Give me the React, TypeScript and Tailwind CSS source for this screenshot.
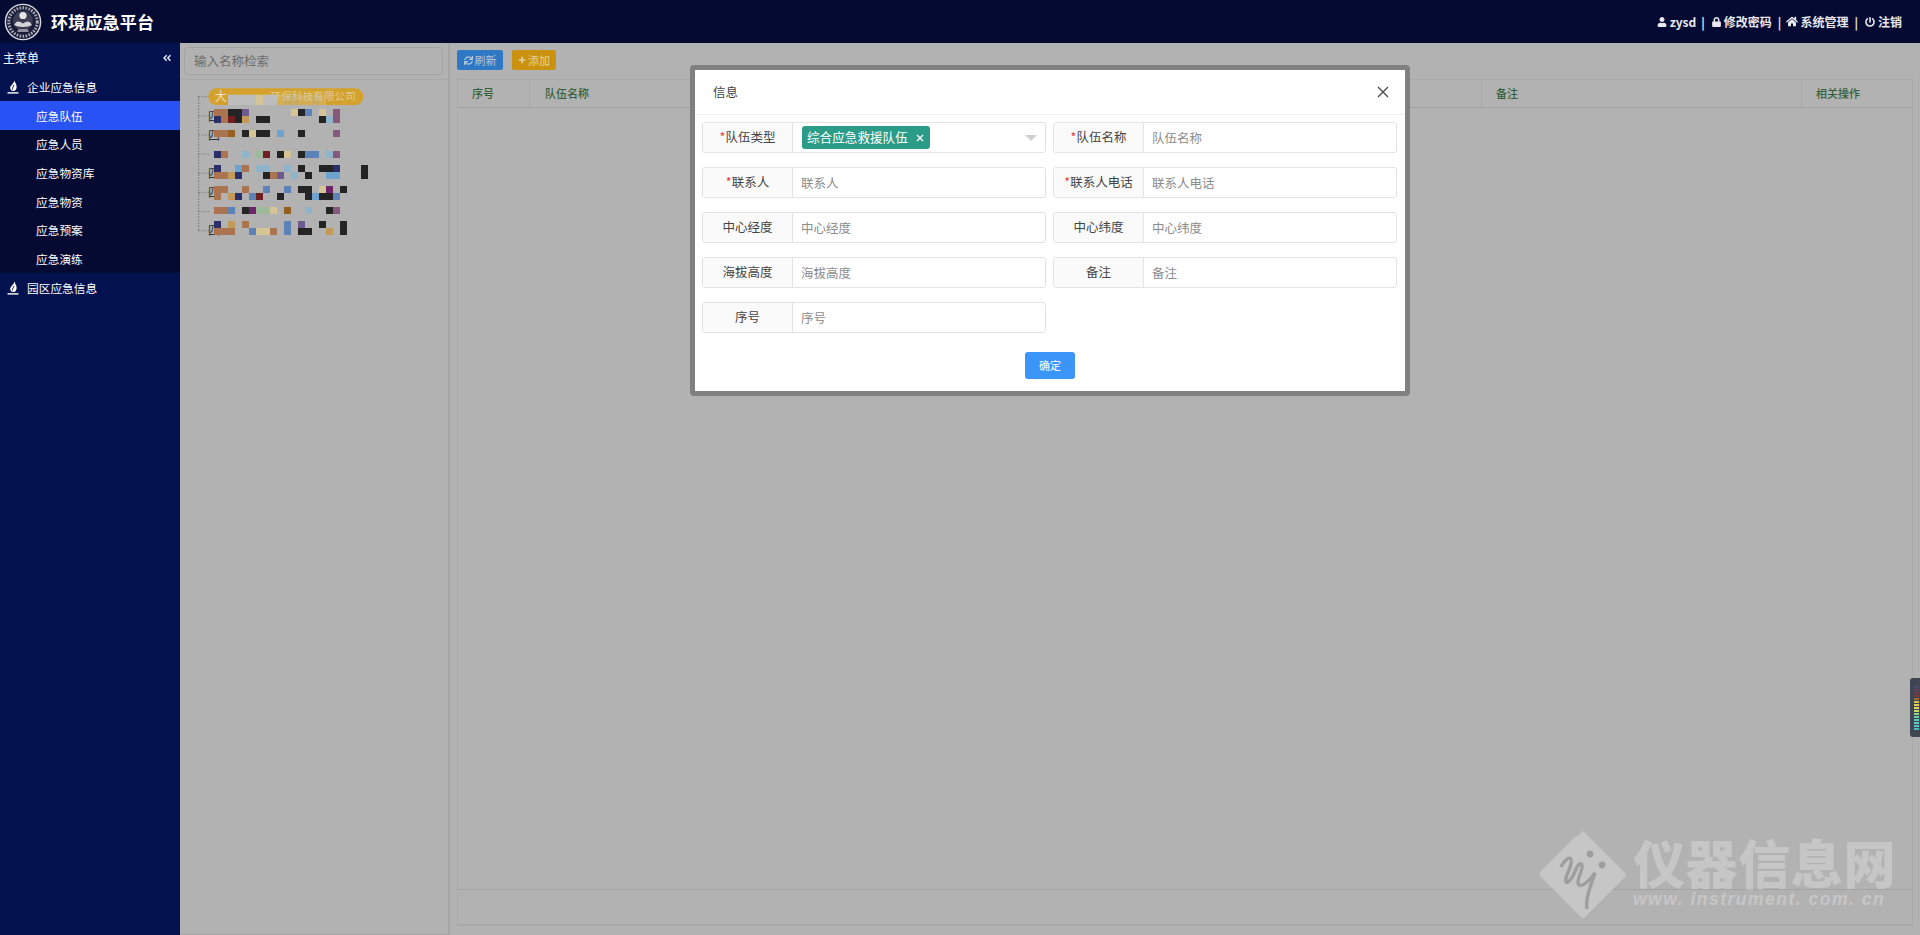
import { FaUser, FaLock, FaHome, FaPowerOff, FaSync, FaPlus, FaAngleDoubleLeft } from "react-icons/fa";

const font = { fontFamily: '"Noto Sans CJK SC", "Noto Sans", sans-serif' };

function Flame() {
  return (
    <svg width="13" height="14" viewBox="0 0 13 14" className="shrink-0">
      <path d="M7.5 0.5 C8 3 10 4.5 9.6 7.5 C9.3 10 8 11 6.2 11 C4.4 11 3.2 9.5 3.2 8 C3.2 5.5 6.5 4 7.5 0.5 Z" fill="#fff" />
      <path d="M7 5 C6.5 7 5 7.5 5.5 9.5" stroke="#0a1550" strokeWidth="1" fill="none" />
      <rect x="0.5" y="12.2" width="11" height="1.4" fill="#fff" />
    </svg>
  );
}

function Emblem() {
  return (
    <svg width="38" height="38" viewBox="0 0 38 38" className="shrink-0">
      <circle cx="19" cy="19" r="17.6" fill="#1a1d3a" stroke="#d8d8de" strokeWidth="1.4" />
      <circle cx="19" cy="19" r="14.2" fill="none" stroke="#a9aab6" strokeWidth="3" strokeDasharray="1.6 1.4" />
      <circle cx="19" cy="17.5" r="10" fill="#3b3d52" />
      <circle cx="19" cy="12.5" r="3.6" fill="#e6e6e6" />
      <path d="M10 22 C13 17 15 18 19 20.5 C23 18 25 17 28 22 C24 24.5 14 24.5 10 22 Z" fill="#d4d4d8" />
      <path d="M13 29 L14.5 26 H23.5 L25 29 Z" fill="#8d8e9c" />
    </svg>
  );
}

const NAVY = "#2c2e6a", BROWN = "#a9744f", DARK = "#242424", PURP = "#6f5a8c", RED = "#6f1f22", TAN = "#c3995a", BLUE = "#6fa3cf", MID = "#5c82b8", PALE = "#8fb4c9", PLUM = "#86587a", MUTE = "#bdbdbd", SAND = "#d5c596", GRN = "#9dbb9b", GOLD = "#96601f", MAG = "#6d2468";

const cells: [number, number, number, number, string][] = [
  [102, 87, 42, 21, BROWN], [144, 87, 42, 21, DARK], [186, 87, 21, 21, PURP], [102, 108, 21, 21, NAVY], [123, 108, 21, 21, BROWN], [144, 108, 21, 21, RED], [165, 108, 21, 21, DARK], [186, 108, 21, 21, TAN],
  [228, 108, 42, 21, DARK], [333, 87, 21, 21, SAND], [354, 87, 21, 21, DARK], [375, 87, 21, 21, MID], [417, 87, 21, 21, SAND], [417, 108, 21, 21, DARK], [438, 108, 21, 21, PALE], [459, 87, 21, 42, PLUM],
  [102, 150, 42, 21, BROWN], [144, 150, 21, 21, GOLD], [186, 150, 21, 21, DARK], [207, 150, 21, 21, SAND], [228, 150, 42, 21, DARK], [291, 150, 21, 21, BLUE], [354, 150, 21, 21, DARK], [459, 150, 21, 21, PLUM],
  [102, 213, 21, 21, NAVY], [123, 213, 21, 21, BROWN], [186, 213, 21, 21, PALE], [228, 213, 21, 21, GRN], [249, 213, 21, 21, RED], [291, 213, 21, 21, DARK], [312, 213, 21, 21, SAND], [354, 213, 21, 21, DARK], [375, 213, 42, 21, MID], [438, 213, 21, 21, PALE], [459, 213, 21, 21, PLUM],
  [102, 255, 21, 21, NAVY], [165, 255, 21, 21, BLUE], [186, 255, 21, 21, BROWN], [228, 255, 42, 21, PALE], [312, 255, 21, 21, PALE], [354, 255, 21, 21, DARK], [417, 255, 42, 21, DARK], [459, 255, 21, 21, NAVY], [543, 255, 21, 42, DARK],
  [102, 276, 42, 21, BROWN], [144, 276, 21, 21, TAN], [165, 276, 21, 21, NAVY], [249, 276, 21, 21, DARK], [270, 276, 21, 21, BROWN], [291, 276, 21, 21, PURP], [333, 276, 21, 21, PALE], [375, 276, 21, 21, DARK], [438, 276, 42, 21, BLUE],
  [102, 318, 42, 21, BROWN], [186, 318, 21, 21, BROWN], [249, 318, 21, 21, MID], [312, 318, 21, 21, MID], [354, 318, 42, 21, DARK], [417, 318, 21, 21, SAND], [438, 318, 21, 21, MAG], [480, 318, 21, 21, DARK],
  [102, 339, 21, 21, BROWN], [144, 339, 21, 21, TAN], [165, 339, 21, 21, NAVY], [207, 339, 21, 21, MID], [228, 339, 21, 21, RED], [291, 339, 21, 21, DARK], [375, 339, 21, 21, DARK], [396, 339, 21, 21, BLUE], [417, 339, 42, 21, DARK], [459, 339, 21, 21, MID],
  [102, 381, 42, 21, BROWN], [144, 381, 21, 21, MID], [186, 381, 21, 21, DARK], [207, 381, 21, 21, MAG], [228, 381, 42, 21, GRN], [270, 381, 21, 21, SAND], [312, 381, 21, 21, GOLD], [375, 381, 21, 21, PALE], [438, 381, 21, 21, DARK], [459, 381, 21, 21, PLUM],
  [102, 423, 21, 21, NAVY], [144, 423, 21, 21, TAN], [186, 423, 21, 21, BROWN], [312, 423, 21, 42, MID], [354, 423, 21, 21, PURP], [417, 423, 21, 21, DARK], [480, 423, 21, 42, DARK],
  [102, 444, 63, 21, BROWN], [207, 444, 21, 21, MID], [228, 444, 42, 21, SAND], [270, 444, 21, 21, BROWN], [354, 444, 42, 21, DARK], [438, 444, 21, 21, TAN],
];

const patches: [number, number, number, string][] = [[144, 44, 84, MUTE], [228, 44, 21, SAND], [249, 44, 42, MUTE], [291, 44, 21, SAND], [312, 44, 42, MUTE], [354, 44, 21, SAND], [375, 44, 21, SAND], [396, 44, 21, MUTE], [417, 44, 21, SAND]];

function TreeMosaic() {
  const rows = [50, 108, 165, 222, 280, 337, 395, 452];
  return (
    <svg width="220" height="170" viewBox="0 0 660 510" className="block">
      <path d="M56 50 V452" stroke="#555" strokeWidth="3" strokeDasharray="3 6" fill="none" />
      {rows.map((y) => (
        <path key={y} d={`M56 ${y} H90`} stroke="#666" strokeWidth="3" strokeDasharray="3 6" fill="none" />
      ))}
      <rect x="85" y="25" width="465" height="50" rx="24" fill="#d4a22c" />
      <text x="104" y="62" fontSize="36" fill="#e8e0c8">大</text>
      <text x="272" y="60" fontSize="32" fill="#dccb98">环保科技有限公司</text>
      {patches.map(([x, y, w, c], i) => (
        <rect key={i} x={x} y={y} width={w} height={31} fill={c} opacity={i < 3 ? 1 : 0.35} />
      ))}
      {[108, 165, 280, 337, 452].map((y) => (
        <text key={y} x="84" y={y + 14} fontSize="36" fill="#333">四</text>
      ))}
      {cells.map(([x, y, w, h, c], i) => (
        <rect key={i} x={x} y={y} width={w} height={h} fill={c} />
      ))}
    </svg>
  );
}

function Field({ label, req, children }: { label: string; req?: boolean; children?: React.ReactNode }) {
  return (
    <div className="flex h-[31px] rounded-[3px] border border-[#e3e3e3] overflow-hidden bg-white">
      <div className="w-[90px] shrink-0 bg-[#fafafa] border-r border-[#e3e3e3] flex items-center justify-center text-[12.5px] text-[#444]">
        {req && <span className="text-[#e33]">*</span>}
        {label}
      </div>
      <div className="flex-1 flex items-center pl-2 pr-3 pt-[1px] text-[12.5px] text-[#8c8c8c] relative">{children ?? label}</div>
    </div>
  );
}

function Diamond() {
  return (
    <svg width="92" height="92" viewBox="0 0 92 92" className="shrink-0">
      <path d="M46 4 L88 46 Q90 48 88 50 L48 90 Q46 92 44 90 L4 50 Q1 47 4 44 L38 10 L42 8 Z" fill="#c6c6c6" />
      <circle cx="53" cy="27" r="3.4" fill="#9e9e9e" />
      <circle cx="65" cy="38" r="3.4" fill="#9e9e9e" />
      <path d="M24 40 C30 28 40 26 30 48 C26 58 32 60 40 40 C44 34 48 36 42 50 C38 62 46 62 58 46 C54 58 48 72 50 82" stroke="#9e9e9e" strokeWidth="3.4" fill="none" />
    </svg>
  );
}

export default function App() {
  const sub = ["应急队伍", "应急人员", "应急物资库", "应急物资", "应急预案", "应急演练"];
  const ticks = ["#4a4a68", "#5a4460", "#6a3a4a", "#7a3a3a", "#9a6a3a", "#d8c24a", "#e0d050", "#e0d860", "#c8d868", "#90d090", "#70c8a8", "#60c8b8", "#60c8c0", "#58c0c0", "#50b8b8"];
  return (
    <div style={font} className="relative w-[1920px] h-[935px] overflow-hidden flex flex-col bg-[#b2b2b2]">
      <header className="h-[43px] shrink-0 bg-[#050a33] flex items-center justify-between pl-1 pr-[18px] text-white">
        <div className="flex items-center gap-[9px]">
          <Emblem />
          <span className="text-[17px] font-bold tracking-[0.2px]">环境应急平台</span>
        </div>
        <div className="flex items-center text-[12px] font-bold text-[#e8e8ee]">
          <FaUser className="w-[10px] h-[10px] mr-[3px]" />
          <span>zysd</span>
          <span className="mx-[5px]">|</span>
          <FaLock className="w-[9px] h-[10px] ml-[2px] mr-[3px]" />
          <span>修改密码</span>
          <span className="ml-[6px] mr-[3px]">|</span>
          <FaHome className="w-[12px] h-[11px] ml-[2px] mr-[2px]" />
          <span>系统管理</span>
          <span className="ml-[6px] mr-[5px]">|</span>
          <FaPowerOff className="w-[10px] h-[10px] ml-[2px] mr-[3px]" />
          <span>注销</span>
        </div>
      </header>
      <div className="flex-1 flex min-h-0">
        <aside className="w-[180px] shrink-0 bg-[#03114f] text-white text-[12px]">
          <div className="h-[29px] flex items-center justify-between pl-[3px] pr-[8px]">
            <span>主菜单</span>
            <FaAngleDoubleLeft className="w-[10px] h-[10px] text-[#dfe3f5]" />
          </div>
          <div className="h-[29px] flex items-center pl-[7px] gap-[7px]">
            <Flame />
            <span className="text-[11.7px]">企业应急信息</span>
          </div>
          <div className="bg-[#050a33]">
            {sub.map((s, i) => (
              <div key={s} className={`h-[28.7px] flex items-center pl-[36px] text-[11.7px] ${i === 0 ? "bg-[#2952f5]" : ""}`}>
                {s}
              </div>
            ))}
          </div>
          <div className="h-[29px] flex items-center pl-[7px] gap-[7px]">
            <Flame />
            <span className="text-[11.7px]">园区应急信息</span>
          </div>
        </aside>
        <main className="flex-1 flex min-w-0">
          <section className="w-[270px] shrink-0 border-r-2 border-[#a6a6a6] border-b border-b-[#a6a6a6]">
            <div className="h-[37px] border-b border-[#a8a8a8] pt-[4px] pl-[4px] pr-[5px]">
              <div className="h-[28px] rounded-[4px] border border-[#a3a3a3] flex items-center pl-[9px] text-[12.5px] text-[#6c6c6c]">输入名称检索</div>
            </div>
            <TreeMosaic />
          </section>
          <section className="flex-1 flex flex-col pl-[7px] pr-[7px] pb-[9px] pt-[7px] min-w-0">
            <div className="h-[20px] flex gap-[9px] shrink-0 text-[11px]">
              <button className="w-[46px] h-[20px] rounded-[2px] bg-[#2f78c4] text-[#b5c6d8] flex items-center justify-center gap-[2px]">
                <FaSync className="w-[9px] h-[9px]" />
                刷新
              </button>
              <button className="w-[44px] h-[20px] rounded-[2px] bg-[#cb9210] text-[#e4d4a4] flex items-center justify-center gap-[2px]">
                <FaPlus className="w-[8px] h-[8px]" />
                添加
              </button>
            </div>
            <div className="mt-[9px] flex-1 flex flex-col border border-[#a9a9a9] border-b-2 min-h-0">
              <div className="h-[28px] shrink-0 flex border-b border-[#a3a3a3] text-[11px] font-medium text-[#35603a]">
                <div className="w-[72px] flex items-center pl-[14px] border-r border-[#a9a9a9]">序号</div>
                <div className="flex-1 flex items-center pl-[15px] border-r border-[#a9a9a9]">队伍名称</div>
                <div className="w-[320px] flex items-center pl-[14px] border-r border-[#a9a9a9]">备注</div>
                <div className="w-[110px] flex items-center pl-[14px]">相关操作</div>
              </div>
              <div className="flex-1" />
              <div className="h-[35px] shrink-0 border-t border-[#a3a3a3]" />
            </div>
          </section>
        </main>
      </div>

      {/* 水印 */}
      <div className="absolute left-[1537px] top-[827px] flex items-center gap-[4px] pointer-events-none">
        <Diamond />
        <div className="flex flex-col">
          <span className="text-[52px] leading-[52px] font-black text-[#c6c6c6] whitespace-nowrap tracking-[0.6px]">仪器信息网</span>
          <span style={{ fontFamily: '"Liberation Sans", sans-serif' }} className="text-[17.5px] leading-[22px] font-bold italic text-[#c6c6c6] whitespace-nowrap tracking-[1.5px]">www. instrument. com. cn</span>
        </div>
      </div>

      {/* 侧边小部件 */}
      <div className="absolute left-[1910px] top-[678px] w-[10px] h-[59px] rounded-l-[3px] bg-[#3f4553] flex flex-col items-end pr-[1px] justify-center gap-[1px]">
        {ticks.map((c, i) => (
          <div key={i} className="w-[5px] h-[2px]" style={{ background: c }} />
        ))}
      </div>

      {/* 弹窗 */}
      <div className="absolute left-[690px] top-[65px] w-[720px] h-[331px] rounded-[4px] border-[5px] border-[#808080] bg-white">
        <div className="h-[45px] flex items-center justify-between border-b border-[#f0f0f0] pl-[18px] pr-[16px]">
          <span className="text-[12.5px] text-[#444]">信息</span>
          <svg width="12" height="12" viewBox="0 0 12 12">
            <path d="M1 1 L11 11 M11 1 L1 11" stroke="#555" strokeWidth="1.5" />
          </svg>
        </div>
        <div className="grid grid-cols-[344px_344px] gap-x-[7px] gap-y-[14px] pl-[7px] pt-[7px]">
          <Field label="队伍类型" req>
            <div className="h-[23px] w-[128px] ml-[1px] -mt-[1px] rounded-[3px] bg-[#2b9c88] text-white text-[12.6px] flex items-center pl-[5px] gap-[8px] whitespace-nowrap">
              综合应急救援队伍
              <svg width="8" height="8" viewBox="0 0 8 8">
                <path d="M1 1 L7 7 M7 1 L1 7" stroke="#fff" strokeWidth="1.4" />
              </svg>
            </div>
            <svg width="12" height="6" viewBox="0 0 12 6" className="absolute right-[8px] top-[12px]">
              <path d="M0 0 H12 L6 6 Z" fill="#d0d0d0" />
            </svg>
          </Field>
          <Field label="队伍名称" req />
          <Field label="联系人" req />
          <Field label="联系人电话" req />
          <Field label="中心经度" />
          <Field label="中心纬度" />
          <Field label="海拔高度" />
          <Field label="备注" />
          <Field label="序号" />
        </div>
        <div className="flex justify-center mt-[19px]">
          <button className="w-[50px] h-[27px] rounded-[3px] bg-[#3a95f7] text-white text-[11px]">确定</button>
        </div>
      </div>
    </div>
  );
}
